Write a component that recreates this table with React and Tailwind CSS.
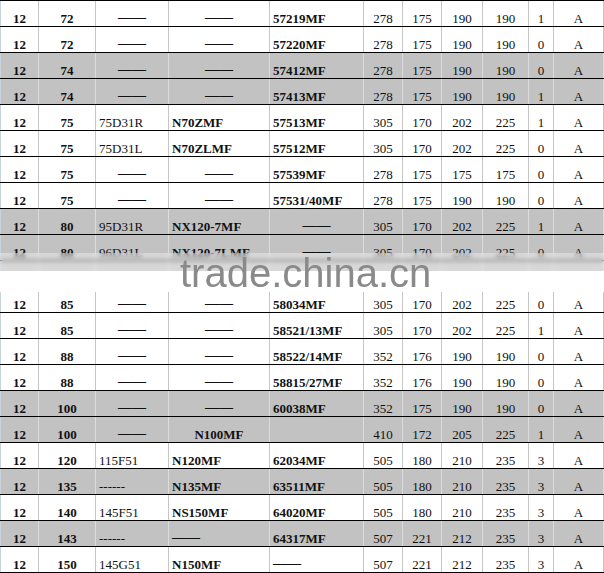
import React from "react";

// battery spec table
const D = "——";

const rows = [
  { c: ["12", "72", D, D, "57219MF", "278", "175", "190", "190", "1", "A"] },
  { c: ["12", "72", D, D, "57220MF", "278", "175", "190", "190", "0", "A"] },
  { c: ["12", "74", D, D, "57412MF", "278", "175", "190", "190", "0", "A"], gray: true },
  { c: ["12", "74", D, D, "57413MF", "278", "175", "190", "190", "1", "A"], gray: true },
  { c: ["12", "75", "75D31R", "N70ZMF", "57513MF", "305", "170", "202", "225", "1", "A"] },
  { c: ["12", "75", "75D31L", "N70ZLMF", "57512MF", "305", "170", "202", "225", "0", "A"] },
  { c: ["12", "75", D, D, "57539MF", "278", "175", "175", "175", "0", "A"] },
  { c: ["12", "75", D, D, "57531/40MF", "278", "175", "190", "190", "0", "A"] },
  { c: ["12", "80", "95D31R", "NX120-7MF", D, "305", "170", "202", "225", "1", "A"], gray: true, center: [4] },
  { c: ["12", "80", "96D31L", "NX120-7LMF", D, "305", "170", "202", "225", "0", "A"], gray: true, center: [4] },
  { c: ["", "", "", "", "", "", "", "", "", "", ""], gray: true },
  { c: ["12", "85", D, D, "58034MF", "305", "170", "202", "225", "0", "A"] },
  { c: ["12", "85", D, D, "58521/13MF", "305", "170", "202", "225", "1", "A"] },
  { c: ["12", "88", D, D, "58522/14MF", "352", "176", "190", "190", "0", "A"] },
  { c: ["12", "88", D, D, "58815/27MF", "352", "176", "190", "190", "0", "A"] },
  { c: ["12", "100", D, D, "60038MF", "352", "175", "190", "190", "0", "A"], gray: true },
  { c: ["12", "100", D, "N100MF", "", "410", "172", "205", "225", "1", "A"], gray: true, center: [3] },
  { c: ["12", "120", "115F51", "N120MF", "62034MF", "505", "180", "210", "235", "3", "A"] },
  { c: ["12", "135", "------", "N135MF", "63511MF", "505", "180", "210", "235", "3", "A"], gray: true },
  { c: ["12", "140", "145F51", "NS150MF", "64020MF", "505", "180", "210", "235", "3", "A"] },
  { c: ["12", "143", "------", D, "64317MF", "507", "221", "212", "235", "3", "A"], gray: true, left: [3] },
  { c: ["12", "150", "145G51", "N150MF", D, "507", "221", "212", "235", "3", "A"] },
];

const widths = ["w-[39px]", "w-[57px]", "w-[73px]", "w-[101px]", "w-[94px]", "w-[39px]", "w-[39px]", "w-[41px]", "w-[46px]", "w-[25px]", "w-[50px]"];

const isLeft = (row, i, v) => {
  if (row.left && row.left.includes(i)) return true;
  if (row.center && row.center.includes(i)) return false;
  if (i === 2 || i === 3) return v !== D;
  if (i === 4) return true;
  return false;
};

const Row = ({ row, last }) => (
  <div className={`flex h-[26px] border-t border-black ${last ? "h-[27px] border-b" : ""} ${row.gray ? "bg-[#c2c2c2]" : "bg-white"}`}>
    {row.c.map((v, i) => (
      <div
        key={i}
        className={`${widths[i]} shrink-0 border-r ${i === 0 ? "border-l border-l-[#c9d3de]" : ""} ${row.gray ? "border-r-[#dcdcdc]" : "border-r-[#c6c6c6]"} ${isLeft(row, i, v) ? "text-left pl-[3px]" : "text-center"} ${i < 2 || i === 3 || i === 4 || v === D ? "font-bold" : ""} ${v === D ? "pt-[9px] text-[14px]" : "pt-[10px]"} leading-[15px] whitespace-nowrap overflow-visible`}
      >
        {v}
      </div>
    ))}
  </div>
);

export default function App() {
  return (
    <div className="relative w-[604px] h-[573px] overflow-hidden bg-white text-[13px] text-[#111] font-['Liberation_Serif',serif]">
      {rows.map((row, i) => (
        <Row key={i} row={row} last={i === rows.length - 1} />
      ))}

      {/* watermark band */}
      <div className="absolute left-0 top-[253px] w-full h-[19px] backdrop-blur-[2px] bg-white/35"></div>
      <div className="absolute left-0 top-[271px] w-full h-[21px] bg-white"></div>
      <div className="absolute left-[180px] top-[253px] text-[40px] leading-[40px] text-[#8a8a8a] font-['Liberation_Sans',sans-serif]">
        trade.china.cn
      </div>
    </div>
  );
}
